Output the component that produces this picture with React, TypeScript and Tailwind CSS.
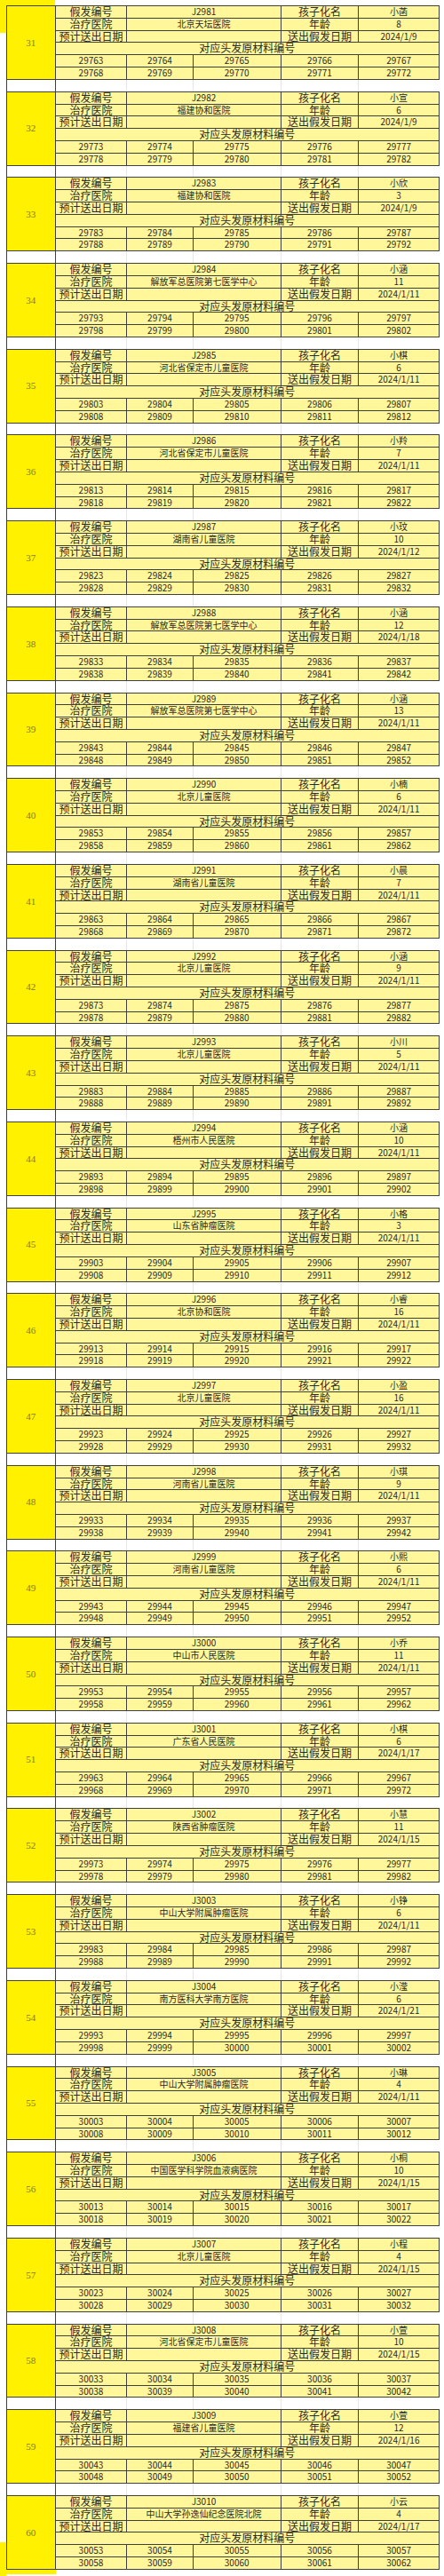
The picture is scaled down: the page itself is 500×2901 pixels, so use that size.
const rows: [string, string, number, string][] = [
  ["北京天坛医院", "小菡", 8, "2024/1/9"],
  ["福建协和医院", "小宣", 6, "2024/1/9"],
  ["福建协和医院", "小欣", 3, "2024/1/9"],
  ["解放军总医院第七医学中心", "小涵", 11, "2024/1/11"],
  ["河北省保定市儿童医院", "小棋", 6, "2024/1/11"],
  ["河北省保定市儿童医院", "小羚", 7, "2024/1/11"],
  ["湖南省儿童医院", "小玟", 10, "2024/1/12"],
  ["解放军总医院第七医学中心", "小涵", 12, "2024/1/18"],
  ["解放军总医院第七医学中心", "小涵", 13, "2024/1/11"],
  ["北京儿童医院", "小楠", 6, "2024/1/11"],
  ["湖南省儿童医院", "小晨", 7, "2024/1/11"],
  ["北京儿童医院", "小涵", 9, "2024/1/11"],
  ["北京儿童医院", "小川", 5, "2024/1/11"],
  ["梧州市人民医院", "小涵", 10, "2024/1/11"],
  ["山东省肿瘤医院", "小格", 3, "2024/1/11"],
  ["北京协和医院", "小睿", 16, "2024/1/11"],
  ["北京儿童医院", "小盈", 16, "2024/1/11"],
  ["河南省儿童医院", "小琪", 9, "2024/1/11"],
  ["河南省儿童医院", "小熙", 6, "2024/1/11"],
  ["中山市人民医院", "小乔", 11, "2024/1/11"],
  ["广东省人民医院", "小棋", 6, "2024/1/17"],
  ["陕西省肿瘤医院", "小慧", 11, "2024/1/15"],
  ["中山大学附属肿瘤医院", "小铮", 6, "2024/1/11"],
  ["南方医科大学南方医院", "小滢", 6, "2024/1/21"],
  ["中山大学附属肿瘤医院", "小琳", 4, "2024/1/11"],
  ["中国医学科学院血液病医院", "小桐", 10, "2024/1/15"],
  ["北京儿童医院", "小程", 4, "2024/1/15"],
  ["河北省保定市儿童医院", "小萱", 10, "2024/1/15"],
  ["福建省儿童医院", "小萱", 12, "2024/1/16"],
  ["中山大学孙逸仙纪念医院北院", "小云", 4, "2024/1/17"],
];

const cell =
  "bg-[#fff799] flex items-center justify-center whitespace-nowrap text-[#2a2a2a]";
const label = `${cell} text-[12px] leading-[12.8px]`;
const value = `${cell} text-[10px] leading-[12.8px]`;

function Block({ index }: { index: number }) {
  const n = 31 + index;
  const [hospital, name, age, date] = rows[index];
  const start = 29763 + index * 10;
  const nums = Array.from({ length: 10 }, (_, i) => start + i);

  return (
    <div className="grid w-[488.3px] grid-cols-[54px_79.6px_73.4px_98px_86.6px_89.7px] grid-rows-[repeat(6,12.823px)] gap-px border border-[#3f3f3f] bg-[#3f3f3f]">
      <div className="row-span-6 flex items-center justify-center bg-[#fff100] font-['Liberation_Serif',serif] text-[11px] text-[#86782a]">
        {n}
      </div>
      <div className={label}>假发编号</div>
      <div className={`${value} col-span-2`}>J{2981 + index}</div>
      <div className={label}>孩子化名</div>
      <div className={value}>{name}</div>

      <div className={label}>治疗医院</div>
      <div className={`${value} col-span-2`}>{hospital}</div>
      <div className={label}>年龄</div>
      <div className={value}>{age}</div>

      <div className={label}>预计送出日期</div>
      <div className={`${value} col-span-2`}></div>
      <div className={label}>送出假发日期</div>
      <div className={value}>{date}</div>

      <div className={`${label} col-span-5`}>对应头发原材料编号</div>

      {nums.map((v) => (
        <div key={v} className={value}>
          {v}
        </div>
      ))}
    </div>
  );
}

function Blank() {
  return (
    <div className="flex h-[12.82px]">
      <div className="w-[56px] border-x border-[#3f3f3f] bg-white" />
      <div className="w-[80.6px] border-r border-[#e6e6e6]" />
      <div className="w-[74.4px] border-r border-[#e6e6e6]" />
      <div className="w-[99px] border-r border-[#e6e6e6]" />
      <div className="w-[87.6px] border-r border-[#e6e6e6]" />
      <div className="w-[90.7px]" />
    </div>
  );
}

export default function App() {
  return (
    <div className="flex h-[2901px] w-[500px] overflow-hidden bg-white font-['Noto_Sans_CJK_SC','Noto_Sans',sans-serif]">
      <div className="flex w-[6.7px] shrink-0 flex-col">
        <div className="h-[37px] bg-[#fff100]" />
        <div className="flex-1" />
        <div className="h-[38px] bg-[#fff100]" />
      </div>
      <div className="flex flex-col">
        <div className="flex h-[6px]">
          <div className="w-[55px] bg-[#fff100]" />
        </div>
        {rows.map((_, i) => (
          <div key={i}>
            <Block index={i} />
            {i < rows.length - 1 && <Blank />}
          </div>
        ))}
        <div className="flex h-[5.02px]">
          <div className="w-[56px] bg-[#fff100]" />
        </div>
      </div>
    </div>
  );
}
